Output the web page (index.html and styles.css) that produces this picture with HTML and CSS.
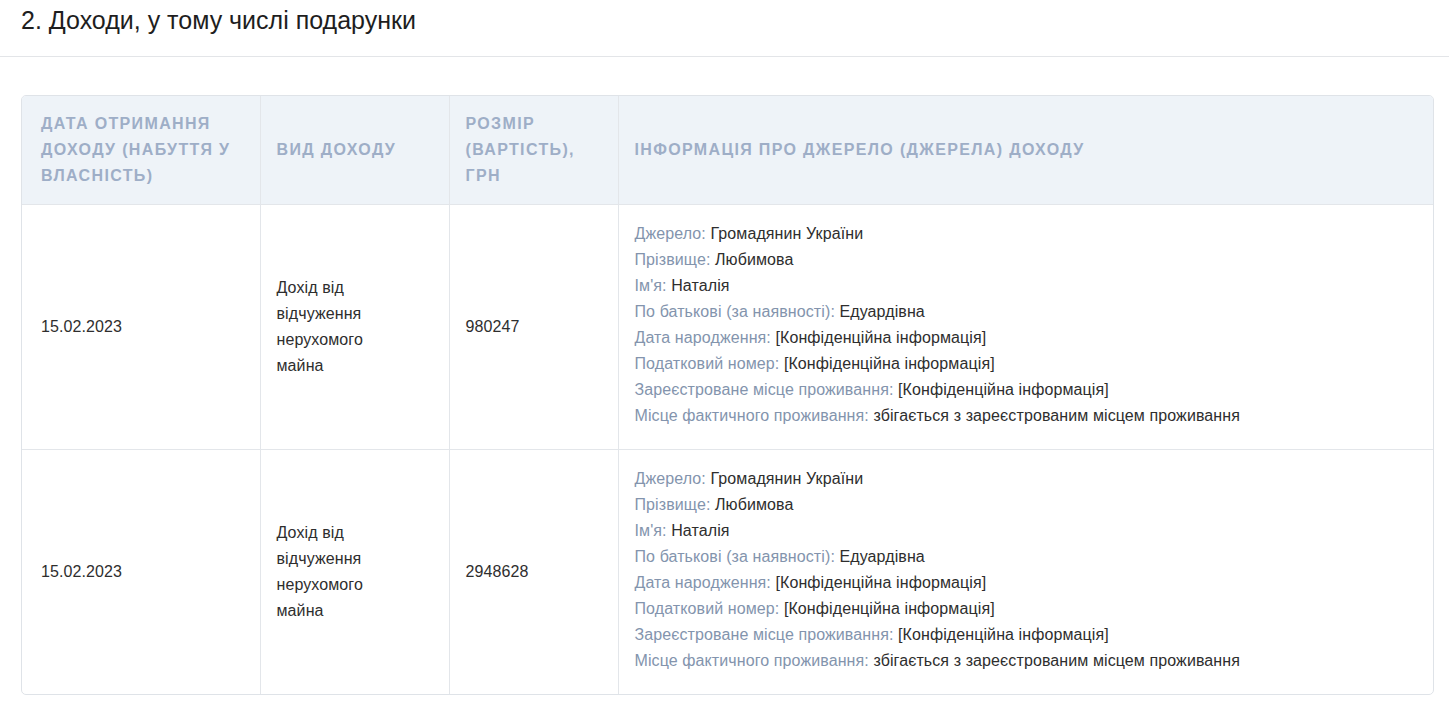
FILE: index.html
```html
<!DOCTYPE html>
<html lang="uk">
<head>
<meta charset="utf-8">
<title>Доходи</title>
<link rel="stylesheet" href="styles.css">
</head>
<body>
<div class="section-head">
  <h2 class="section-title">2. Доходи, у тому числі подарунки</h2>
</div>
<div class="section-body">
  <div class="table-wrap">
    <table class="income">
      <colgroup>
        <col class="c1"><col class="c2"><col class="c3"><col class="c4">
      </colgroup>
      <thead>
        <tr>
          <th>Дата отримання доходу (набуття у власність)</th>
          <th>Вид доходу</th>
          <th>Розмір (вартість), грн</th>
          <th>Інформація про джерело (джерела) доходу</th>
        </tr>
      </thead>
      <tbody>
        <tr>
          <td>15.02.2023</td>
          <td><div class="kind">Дохід від відчуження нерухомого майна</div></td>
          <td>980247</td>
          <td>
            <div class="info">
              <div><span class="lbl">Джерело:</span> Громадянин України</div>
              <div><span class="lbl">Прізвище:</span> Любимова</div>
              <div><span class="lbl">Ім'я:</span> Наталія</div>
              <div><span class="lbl">По батькові (за наявності):</span> Едуардівна</div>
              <div><span class="lbl">Дата народження:</span> [Конфіденційна інформація]</div>
              <div><span class="lbl">Податковий номер:</span> [Конфіденційна інформація]</div>
              <div><span class="lbl">Зареєстроване місце проживання:</span> [Конфіденційна інформація]</div>
              <div><span class="lbl">Місце фактичного проживання:</span> збігається з зареєстрованим місцем проживання</div>
            </div>
          </td>
        </tr>
        <tr>
          <td>15.02.2023</td>
          <td><div class="kind">Дохід від відчуження нерухомого майна</div></td>
          <td>2948628</td>
          <td>
            <div class="info">
              <div><span class="lbl">Джерело:</span> Громадянин України</div>
              <div><span class="lbl">Прізвище:</span> Любимова</div>
              <div><span class="lbl">Ім'я:</span> Наталія</div>
              <div><span class="lbl">По батькові (за наявності):</span> Едуардівна</div>
              <div><span class="lbl">Дата народження:</span> [Конфіденційна інформація]</div>
              <div><span class="lbl">Податковий номер:</span> [Конфіденційна інформація]</div>
              <div><span class="lbl">Зареєстроване місце проживання:</span> [Конфіденційна інформація]</div>
              <div><span class="lbl">Місце фактичного проживання:</span> збігається з зареєстрованим місцем проживання</div>
            </div>
          </td>
        </tr>
      </tbody>
    </table>
  </div>
</div>
</body>
</html>
```

FILE: styles.css
```css
html, body {
  margin: 0;
  padding: 0;
  background: #fff;
}
body {
  font-family: "Liberation Sans", Arial, sans-serif;
  color: #2b2b2b;
}
.section-head {
  padding: 5px 21px 0;
  height: 51px;
  border-bottom: 1px solid #e3e5e8;
}
.section-title {
  margin: 0;
  font-size: 25px;
  font-weight: normal;
  line-height: 30px;
  color: #1e1e1e;
}
.section-body {
  padding: 38px 15px 0 21px;
}
.table-wrap {
  border: 1px solid #dfe3e8;
  border-radius: 5px;
  overflow: hidden;
}
.income {
  width: 100%;
  border-collapse: collapse;
  table-layout: fixed;
}
.c1 { width: 238px; }
.c2 { width: 189px; }
.c3 { width: 169px; }
.income th,
.income td {
  padding: 15px 15px 15px 16px;
  text-align: left;
  vertical-align: middle;
  line-height: 26px;
  border-left: 1px solid #e3e6ea;
  border-top: 1px solid #e3e6ea;
}
.income th:first-child,
.income td:first-child {
  border-left: none;
  padding-left: 19px;
}
.income thead th {
  border-top: none;
  background: #eef3f8;
  color: #9eaec7;
  font-size: 16px;
  font-weight: bold;
  text-transform: uppercase;
  letter-spacing: 1.35px;
}
.income td {
  font-size: 16px;
  letter-spacing: 0.1px;
  color: #2e2e2e;
}
.kind {
  max-width: 118px;
}
.info {
  padding-top: 1px;
  padding-bottom: 5px;
}
.lbl {
  color: #8394ad;
}
```
